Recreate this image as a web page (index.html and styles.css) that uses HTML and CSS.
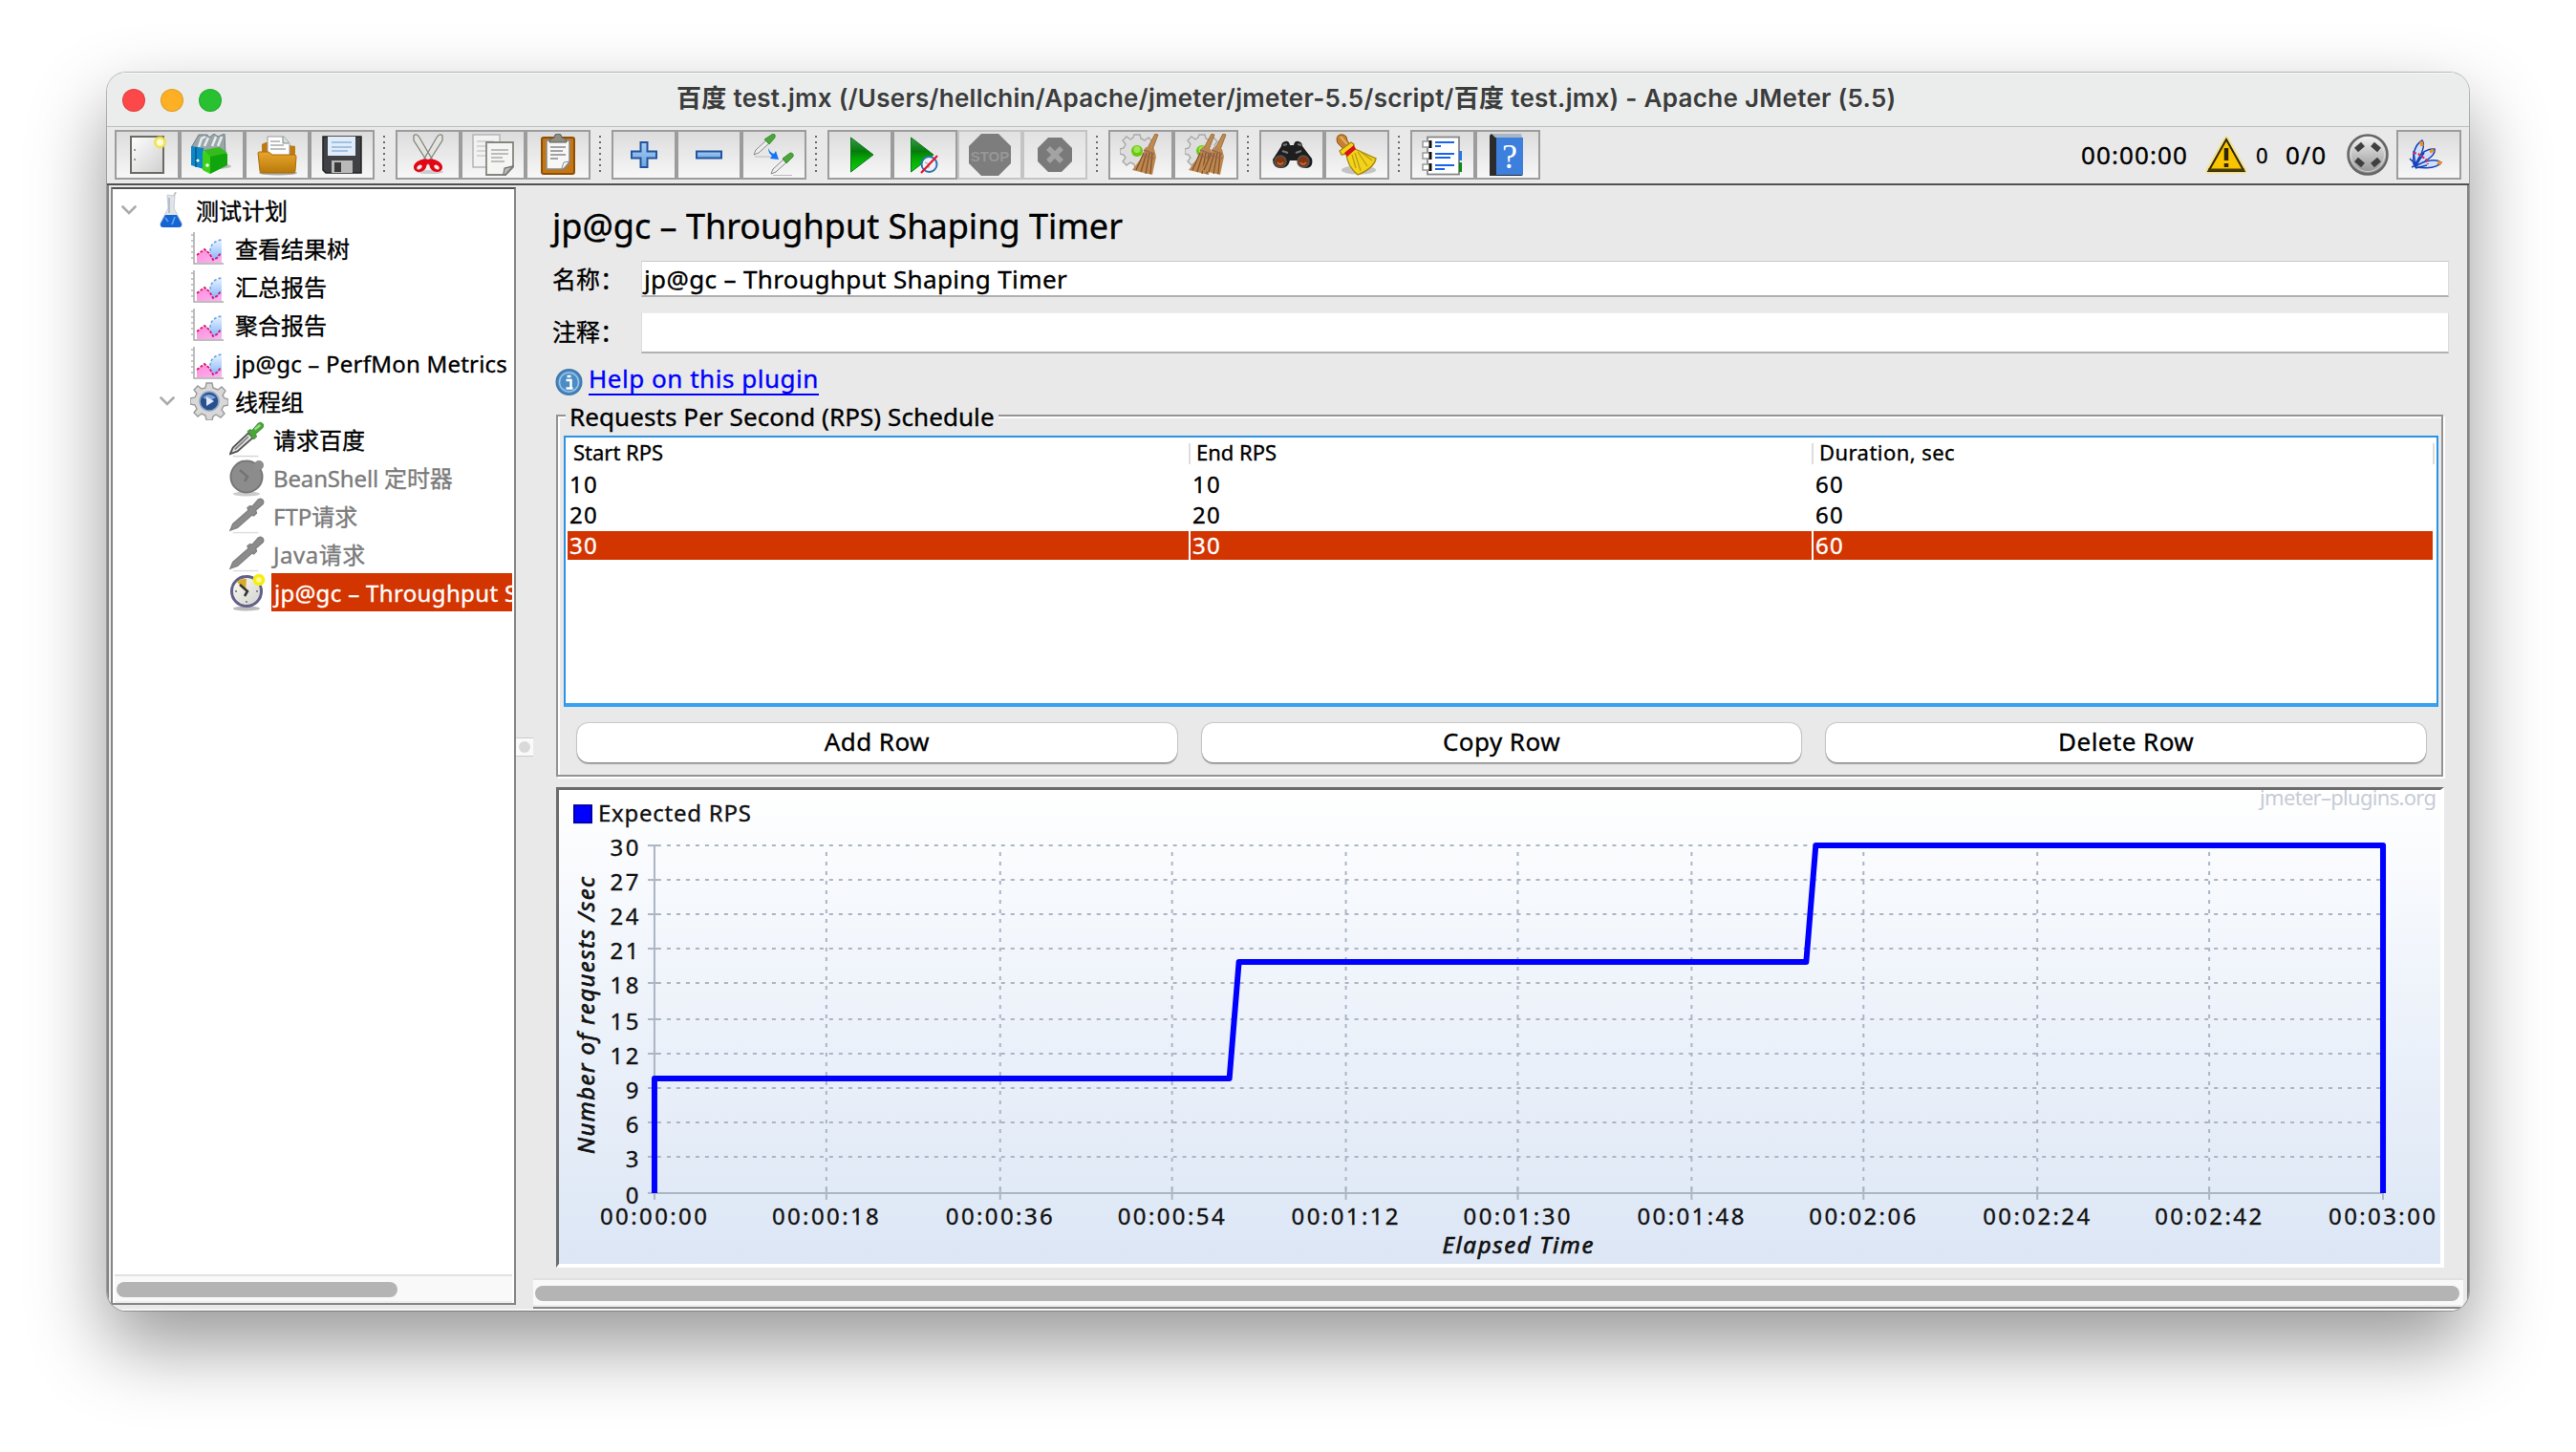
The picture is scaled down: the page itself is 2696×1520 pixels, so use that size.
FILE: index.html
```html
<!DOCTYPE html>
<html lang="zh-CN">
<head>
<meta charset="utf-8">
<title>Apache JMeter (5.5)</title>
<link rel="stylesheet" href="styles.css">
</head>
<body>
<svg class="defs" width="0" height="0" aria-hidden="true">
  <defs>
    <linearGradient id="gGray" x1="0" y1="0" x2="1" y2="1"><stop offset="0" stop-color="#fff"/><stop offset="1" stop-color="#cfcfcf"/></linearGradient>
    <linearGradient id="gGreen" x1="0" y1="0" x2="0" y2="1"><stop offset="0" stop-color="#3c9a4a"/><stop offset=".4" stop-color="#067a0c"/><stop offset=".6" stop-color="#04a404"/><stop offset="1" stop-color="#0ed00e"/></linearGradient>
    <linearGradient id="gFolder" x1="0" y1="0" x2="0" y2="1"><stop offset="0" stop-color="#e9a52c"/><stop offset="1" stop-color="#b97a0c"/></linearGradient>
    <linearGradient id="gBlue" x1="0" y1="0" x2="0" y2="1"><stop offset="0" stop-color="#a9cdf2"/><stop offset="1" stop-color="#6fa5e0"/></linearGradient>
    <linearGradient id="gMetal" x1="0" y1="0" x2="0" y2="1"><stop offset="0" stop-color="#f4f4f4"/><stop offset="1" stop-color="#8f8f8f"/></linearGradient>
    <linearGradient id="gPink" x1="0" y1="0" x2="1" y2="1"><stop offset="0" stop-color="#ff8ad8"/><stop offset="1" stop-color="#f9b6f3"/></linearGradient>
    <linearGradient id="gSky" x1="0" y1="0" x2="0" y2="1"><stop offset="0" stop-color="#eaf3ff"/><stop offset="1" stop-color="#7fb4fa"/></linearGradient>
    <linearGradient id="gDisk" x1="0" y1="0" x2="1" y2="1"><stop offset="0" stop-color="#fffff4"/><stop offset="1" stop-color="#cfcfce"/></linearGradient>
    <symbol id="chart" viewBox="0 0 36 36">
      <path d="M3 1v33h31" fill="none" stroke="#a9a9a9" stroke-width="1.500"/><path d="M0 4h3M0 10h3M0 16h3M0 22h3M0 28h3" stroke="#b5b5b5" stroke-width="1.500"/>
      <path d="M20 30V18l4-6 8-3v22z" fill="url(#gSky)"/><path d="M20 21c0-7 5-11 12-12" fill="none" stroke="#6aa5ee" stroke-width="1.600" stroke-dasharray="3 2"/>
      <path d="M6 33v-8l9-6 5 5 4 6 8-5v8z" fill="url(#gPink)"/><path d="M6 25l8-6 5 4 4 7 4-2 4-5" fill="none" stroke="#d8186f" stroke-width="1.800" stroke-dasharray="3 1.500"/>
    </symbol>
    <symbol id="dropper" viewBox="0 0 40 40">
      <path d="M4 38.500h28" stroke="#d5d5d5" stroke-width="1.500"/>
      <path d="M1 36l3-7L21 13l5 5L9 33z" fill="#e6e6e6" stroke="#555" stroke-width="2"/>
      <path d="M6 31L21 17" stroke="#888" stroke-width="2"/>
      <path d="M20 11l3-2 2 1 7-8c3-2 7 1 5 5l-8 7 1 3-3 3z" fill="#4ba53a" stroke="#3b8f30" stroke-width="1"/><path d="M28 9l6-5" stroke="#9bdc85" stroke-width="2.500"/>
    </symbol>
    <symbol id="dropperOff" viewBox="0 0 40 40">
      <path d="M4 38.500h28" stroke="#ddd" stroke-width="1.500"/>
      <path d="M1 36l3-7L21 14l-1-3 3-2 2 1 7-8c3-2 7 1 5 5l-8 7 1 3-3 3-2-1L9 33z" fill="#8c8c8c" stroke="#828282" stroke-width="1.500"/>
    </symbol>
    <symbol id="gearS" viewBox="-20 -20 40 40">
      <path d="M-4-14l1-5h6l1 5 5 2 4-3 4 4-3 5 2 3 4 1v6l-5 1-2 4 3 4-4 4-5-3-3 2-1 4h-6l-1-5-4-2-4 3-4-4 3-4-2-4-5-1v-6l5-1 2-4-3-4 4-4 4 3z" fill="#d8d8d8" stroke="#9a9a9a" stroke-width="1.400"/>
    </symbol>
    <symbol id="clock" viewBox="0 0 38 40">
      <ellipse cx="18" cy="37" rx="14" ry="2.500" fill="#bbb"/><circle cx="18" cy="19" r="15.500" fill="url(#gDisk)" stroke="#62608a" stroke-width="3"/>
      <path d="M17 19L8 9q5-4 10-3z" fill="#d9a92c"/><path d="M11 12l8 7-3 5" fill="none" stroke="#333" stroke-width="2.500"/>
      <path d="M18 29v2M6 19h2M28 19h2" stroke="#888" stroke-width="2"/><circle cx="31" cy="7" r="4.500" fill="#fff9a0" stroke="#f7ee10" stroke-width="3.500"/>
    </symbol>
    <symbol id="whisk" viewBox="0 0 30 44"><path d="M26 0l3 1-6 16-5-2z" fill="#c08a52" stroke="#8f5f30" stroke-width=".8"/><path d="M16 14l9 2 2 8-4 19-21-5 9-12z" fill="#bd8750"/><path d="M14 20L6 38M17 20l-6 20M20 20l-4 22M23 20l-2 22" stroke="#83542a" stroke-width="1.300"/><path d="M14 17l11 4M12 22l13 4" stroke="#9a6a55" stroke-width="1.500"/></symbol>
    <symbol id="cog" viewBox="-18 -18 36 36"><path d="M-3-17h6l1 4 4 2 4-3 4 4-3 4 2 3 3 1v5l-4 1-1 4 3 3-4 4-4-3-4 2-1 4h-5l-1-4-4-2-4 3-4-4 3-4-2-3-4-1v-5l4-1 2-4-3-4 4-4 4 3 3-2z" fill="#dedede" stroke="#a8a8a8" stroke-width="1.400"/><circle r="6" fill="#69c811"/><circle cy="-1.500" r="3.500" fill="#a0e650"/></symbol>
  </defs>
</svg>

<div class="window">
  <header class="titlebar">
    <span class="light red"></span><span class="light amber"></span><span class="light green"></span>
    <h1 class="caption">百度 test.jmx (/Users/hellchin/Apache/jmeter/jmeter-5.5/script/百度 test.jmx) - Apache JMeter (5.5)</h1>
  </header>

  <div class="toolbar">
    <div class="tools">
      <button class="tool"><svg viewBox="0 0 44 44"><rect x="5" y="3" width="34" height="38" fill="url(#gGray)" stroke="#6b6b66" stroke-width="2"/><path d="M8 17h2M8 27h2" stroke="#999" stroke-width="2"/><circle cx="35.500" cy="9" r="5" fill="#fffde0" stroke="#f3e13c" stroke-width="3" stroke-opacity=".85"/></svg></button>
      <button class="tool"><svg viewBox="0 0 44 44"><ellipse cx="26" cy="34" rx="16" ry="3" fill="#bbb"/><path d="M1 13L8 1h9l2 3 5-4 4 3 7-3 1 22H8z" fill="#9aa5aa" stroke="#6e7d84"/><path d="M8 14l3-9 4-2M14 13l4-9M22 13l4-10M28 13l4-10" stroke="#e8edee" stroke-width="2.500" fill="none"/><path d="M0 13l13 2v22L0 33z" fill="#0b86c6"/><path d="M5 14v21" stroke="#035688" stroke-width="1.500"/><path d="M12 18l8 4v20l-8-4z" fill="#3dd21a"/><path d="M20 22l12-3 6 2v12L20 42z" fill="#10a50d"/><path d="M13 17l17-3 8 6-18 4z" fill="#35bb1d"/><circle cx="17" cy="33" r="1.800" fill="#fff"/><circle cx="7" cy="28" r="1.600" fill="#fff"/></svg></button>
      <button class="tool"><svg viewBox="0 0 44 44"><ellipse cx="23" cy="41" rx="20" ry="2.500" fill="#aaa"/><path d="M6 11l4-2h5v10h-9zM34 12l7 1v20h-7z" fill="#bf7a10"/><path d="M12 3h17l6 7v14H12z" fill="#fff" stroke="#999"/><path d="M28 3v7h6" fill="#d6dede" stroke="#7b8b8b"/><path d="M15 8h10M15 12h14M15 16h16" stroke="#aaa" stroke-width="1.500"/><path d="M2 20q0-1 2-1h9l4 3h23q2 0 2 2l-1 15q0 2-3 2H7q-3 0-3-2z" fill="url(#gFolder)" stroke="#a86c08"/></svg></button>
      <button class="tool"><svg viewBox="0 0 44 44"><path d="M2 3h40v38H5l-3-3z" fill="#3f4145" stroke="#222" stroke-width="1.500"/><rect x="7" y="3" width="29" height="20" fill="#dfecfa"/><path d="M11 9h21M11 14h21M11 18h17" stroke="#92b3d6" stroke-width="1.500"/><rect x="11" y="28" width="22" height="13" fill="#b9b9b9"/><rect x="14" y="30" width="7" height="10" fill="#3a3a3a"/></svg></button>
      <i class="grip"></i>
      <button class="tool"><svg viewBox="0 0 44 44"><ellipse cx="24" cy="40" rx="14" ry="2" fill="#ccc"/><path d="M7 2q3-3 6 2l14 24-4 4L7 7zM37 2q-3-3-6 2L17 28l4 4L37 7z" fill="#e3e3e0" stroke="#85857e" stroke-width="1.300"/><path d="M22 27c-6-2-16 3-15 9 1 5 9 5 12 1 2-3 1-5 3-6 2 1 1 3 3 6 3 4 11 4 12-1 1-6-9-11-15-9z" fill="#e30613"/><ellipse cx="13" cy="35" rx="3" ry="2" fill="#eee" transform="rotate(-40 13 35)"/><ellipse cx="31" cy="35" rx="3" ry="2" fill="#eee" transform="rotate(40 31 35)"/></svg></button>
      <button class="tool"><svg viewBox="0 0 44 44"><rect x="1" y="1" width="28" height="34" fill="#f2f2f2" stroke="#b5b5b5" stroke-width="1.500"/><path d="M5 8h18M5 13h18M5 18h10M5 23h10" stroke="#ccc" stroke-width="1.500"/><path d="M15 9h28v26l-8 8H15z" fill="#f5f5f3" stroke="#85857f" stroke-width="1.800"/><path d="M20 17h18M20 21h18M20 25h12M20 29h14" stroke="#aaa" stroke-width="1.500"/><path d="M43 34l-8 9-2-1 1-6z" fill="#b9b9b5" stroke="#777" stroke-width="1.300"/></svg></button>
      <button class="tool"><svg viewBox="0 0 44 44"><rect x="5" y="4" width="34" height="38" rx="2" fill="#c57512" stroke="#8c4f08" stroke-width="2"/><path d="M10 7h24v23l-6 7H10z" fill="#f7f7f7" stroke="#888" stroke-width="1.500"/><path d="M34 29l-7 8-1-1 2-6z" fill="#fff" stroke="#888"/><path d="M14 14h16M14 18h13M14 22h16M14 26h8" stroke="#888" stroke-width="1.500"/><path d="M13 9q0-4 5-5 0-4 4-4t4 4q5 1 5 5z" fill="#8d8d84" stroke="#5c5c55"/></svg></button>
      <i class="grip"></i>
      <button class="tool"><svg viewBox="0 0 44 44"><path d="M18.500 9h7v9.500H35v7h-9.500V35h-7v-9.500H9v-7h9.500z" fill="url(#gBlue)" stroke="#20549e" stroke-width="2"/></svg></button>
      <button class="tool"><svg viewBox="0 0 44 44"><rect x="9" y="18.500" width="26" height="7" fill="url(#gBlue)" stroke="#20549e" stroke-width="2"/></svg></button>
      <button class="tool"><svg viewBox="0 0 44 44"><path d="M1 22l2-5L14 7l3 3L6 20z" fill="#eee" stroke="#888"/><path d="M12 6l9-6q3 0 2 4l-6 7z" fill="#4ba53a" stroke="#3b8f30"/><path d="M19 42l2-5 11-10 3 3-11 10z" fill="#eee" stroke="#888"/><path d="M31 26l8-6q4 0 3 4l-7 7z" fill="#4ba53a" stroke="#3b8f30"/><path d="M2 24h18M21 43.500h20" stroke="#bbb"/><path d="M16 15q2 5 6 6l2-3 3 9-9-1 2-3q-4-3-4-8z" fill="#1773f5"/></svg></button>
      <i class="grip"></i>
      <button class="tool"><svg viewBox="0 0 44 44"><path d="M12.500 4L36 22 12.500 40z" fill="url(#gGreen)" stroke="#0b7a1c"/></svg></button>
      <button class="tool"><svg viewBox="0 0 44 44"><path d="M7.500 4L31 22 7.500 40z" fill="url(#gGreen)" stroke="#0b7a1c"/><circle cx="26.500" cy="32" r="8" fill="#eef2f8" stroke="#2a73b8" stroke-width="2"/><path d="M22 30l5 2 3-4M26 32v4" stroke="#999" fill="none"/><path d="M18 41L35 23" stroke="#e8152a" stroke-width="2.200"/></svg></button>
      <button class="tool off"><svg viewBox="0 0 44 44"><path d="M13 0h18l13 13v18L31 44H13L0 31V13z" fill="#7d7d7d"/><text x="22" y="29" text-anchor="middle" class="stop">STOP</text></svg></button>
      <button class="tool off"><svg viewBox="0 0 44 44"><path d="M15 4h14l11 11v14L29 40H15L4 29V15z" fill="#7a7a7a"/><path d="M15 15l14 14M29 15L15 29" stroke="#a3a3a3" stroke-width="5.500"/></svg></button>
      <i class="grip"></i>
      <button class="tool"><svg viewBox="0 0 44 44"><use href="#cog" x="0" y="0" width="36" height="36"/><use href="#whisk" x="11" y="0" width="30" height="44"/></svg></button>
      <button class="tool"><svg viewBox="0 0 44 44"><use href="#cog" x="0" y="0" width="36" height="36"/><use href="#whisk" x="2" y="0" width="30" height="44"/><use href="#whisk" x="14" y="0" width="30" height="44"/></svg></button>
      <i class="grip"></i>
      <button class="tool"><svg viewBox="0 0 44 44"><path d="M11 13q0-4 4-5t5 4h4q1-5 5-4t4 5l10 13q2 10-6 10-7 0-9-8h-8q-2 8-9 8-9 0-9-9z" fill="#1e1e1e"/><path d="M13 12l4-1M28 11l4 1M12 18l6 2M26 20l6-2" stroke="#777" stroke-width="2"/><circle cx="10" cy="29" r="6" fill="#7d3512" stroke="#555" stroke-width="1.500"/><circle cx="34" cy="29" r="6" fill="#7d3512" stroke="#555" stroke-width="1.500"/><path d="M7 30q3 4 6 0M31 30q3 4 6 0" stroke="#c96a35" stroke-width="2" fill="none"/></svg></button>
      <button class="tool"><svg viewBox="0 0 44 44"><ellipse cx="24" cy="38" rx="18" ry="4.500" fill="#c4c4c4"/><path d="M1 6q0-6 7-5 4 1 4 6l3 5-6 5-5-5q-3-2-3-6z" fill="#c7802f" stroke="#8b5518"/><path d="M5 3l7 8" stroke="#e5b06c" stroke-width="2"/><path d="M4 18l12-9 3 2-1 4 24 11q-2 10-19 17Q12 34 11 21l-5 1z" fill="#f2d21b" stroke="#a68706" stroke-width="1.300"/><path d="M9 20l10-8 2 4-9 8z" fill="#d91219"/><path d="M20 20l6 19M23 19l10 15M17 22l4 14M25 18l13 10" stroke="#b99a10" stroke-width="1.200"/></svg></button>
      <i class="grip"></i>
      <button class="tool"><svg viewBox="0 0 44 44"><rect x="6" y="3.500" width="33" height="39" fill="#fff" stroke="#888" stroke-width="1.800"/><rect x="39" y="18" width="3" height="10" fill="#2677e8"/><rect x="39" y="30" width="3" height="10" fill="#0c8a12"/><g fill="#fff" stroke="#999" stroke-width="1.500"><rect x="1" y="8" width="8" height="6"/><rect x="1" y="20" width="8" height="6"/><rect x="1" y="32" width="8" height="6"/></g><path d="M9 7v8M9 19v8M9 31v8" stroke="#111" stroke-width="3"/><path d="M14 9h20M14 21h20M14 33h20" stroke="#1763ec" stroke-width="2"/><path d="M14 13h6M14 25h16M14 37h10" stroke="#1763ec" stroke-width="2"/></svg></button>
      <button class="tool"><svg viewBox="0 0 44 44"><path d="M3 3q0-3 3-3h30v4l2 38q0 2-2 2H3z" fill="#2c2c2c"/><path d="M5 0h31l1 4H9z" fill="#a9b7c4"/><path d="M10 4h28v39H10z" fill="#3c7fdd"/><text x="24" y="36" text-anchor="middle" class="ask">?</text></svg></button>
    </div>
    <div class="status">
      <span class="clockText">00:00:00</span>
      <svg class="warn" viewBox="0 0 44 40"><path d="M22 3L41 37H3z" fill="#fbc400" stroke="#f3e08a" stroke-width="5" stroke-linejoin="round"/><path d="M22 4L40.500 37h-37z" fill="#fbc400" stroke="#2e2704" stroke-width="2"/><path d="M3 36h38" stroke="#4a3a00" stroke-width="3"/><path d="M22 13v13M22 29v4" stroke="#2e2704" stroke-width="4.500"/></svg>
      <span class="errs">0</span>
      <span class="threads">0/0</span>
      <svg class="knob" viewBox="0 0 44 44"><circle cx="22" cy="22" r="20.500" fill="url(#gMetal)" stroke="#666" stroke-width="2.500"/><circle cx="22" cy="22" r="17.500" fill="none" stroke="#eee" stroke-opacity=".6"/><g stroke="#3f3f3f" stroke-width="6" fill="none"><path d="M10 17l7-6M27 11l7 6M10 27l7 6M34 27l-7 6"/></g></svg>
      <button class="tool"><svg viewBox="0 0 44 44"><g fill="#cfe0fb" stroke="#1643b8" stroke-width="1.500"><path d="M6 32Q4 14 15 7q5 7-8 26z"/><path d="M8 33Q14 15 28 16q2 8-20 18z"/><path d="M8 34q18-10 27-4-6 8-27 5z"/></g><path d="M2 26l7 7-5 2M6 18l2 15M13 24l-5 10M17 20L8 34M8 36l12-3" stroke="#1643b8" stroke-width="1.500" fill="none"/><path d="M6 20l5 1 3 3 5 2 2 6" stroke="#e0244e" stroke-width="2" stroke-dasharray="3 2" fill="none"/><path d="M14 8l1 5M23 19l4-2M31 30l4 1" stroke="#f58c1b" stroke-width="3.500"/></svg></button>
    </div>
  </div>

  <div class="body">
    <aside class="tree">
      <ul class="nodes">
        <li class="node l0"><svg class="chev" viewBox="0 0 16 10"><path d="M1.500 1.500L8 8l6.500-6.500"/></svg><svg class="ico flask" viewBox="0 0 28 38"><path d="M10 3l8 1-1 13 8 15q1 4-3 4H6q-4 0-3-4l8-15z" fill="#dfe3ea" stroke="#c9ced6"/><path d="M12 6v16" stroke="#aab2c0" stroke-width="1.500"/><path d="M17 4l2-4" stroke="#c5c5c5" stroke-width="2"/><path d="M8 24h12l5 9q1 4-3 4H6q-4 0-3-4z" fill="#1464d2"/><path d="M8 27l3 4M18 26l-3 8" stroke="#5b9bf2" stroke-width="2"/></svg><span>测试计划</span></li>
        <li class="node l1"><svg class="ico"><use href="#chart"/></svg><span>查看结果树</span></li>
        <li class="node l1"><svg class="ico"><use href="#chart"/></svg><span>汇总报告</span></li>
        <li class="node l1"><svg class="ico"><use href="#chart"/></svg><span>聚合报告</span></li>
        <li class="node l1"><svg class="ico"><use href="#chart"/></svg><span class="w1">jp@gc – PerfMon Metrics</span></li>
        <li class="node l1 group"><svg class="chev" viewBox="0 0 16 10"><path d="M1.500 1.500L8 8l6.500-6.500"/></svg><svg class="ico gear" viewBox="0 0 40 40"><use href="#gearS" width="40" height="40"/><circle cx="20" cy="20" r="10" fill="#28508f" stroke="#8ea3c4" stroke-width="1.500"/><path d="M13 16q6-6 14 0l-7 4z" fill="#7fa3d6"/><path d="M17 15l8 5-8 5z" fill="#dfe9f7"/></svg><span>线程组</span></li>
        <li class="node l2"><svg class="ico"><use href="#dropper"/></svg><span>请求百度</span></li>
        <li class="node l2 dim"><svg class="ico" viewBox="0 0 38 40"><ellipse cx="18" cy="37" rx="14" ry="2.500" fill="#ccc"/><circle cx="18" cy="19" r="16.500" fill="#8c8c8c" stroke="#777" stroke-width="2"/><circle cx="31" cy="7" r="5" fill="#8e8e8e"/><path d="M11 12l8 7-3 5" fill="none" stroke="#747474" stroke-width="2.500"/></svg><span class="w2">BeanShell 定时器</span></li>
        <li class="node l2 dim"><svg class="ico"><use href="#dropperOff"/></svg><span>FTP请求</span></li>
        <li class="node l2 dim"><svg class="ico"><use href="#dropperOff"/></svg><span class="w3">Java请求</span></li>
        <li class="node l2 sel"><svg class="ico"><use href="#clock"/></svg><span>jp@gc – Throughput Shaping Timer</span></li>
      </ul>
      <div class="scroll"><div class="thumb"></div></div>
    </aside>
    <div class="splitter"><i></i></div>
    <main class="pane">
      <div class="form">
        <h2 class="heading">jp@gc – Throughput Shaping Timer</h2>
        <div class="field"><label>名称：</label><div class="input">jp@gc – Throughput Shaping Timer</div></div>
        <div class="field second"><label>注释：</label><div class="input"></div></div>
        <div class="help"><svg viewBox="0 0 28 28"><circle cx="14" cy="14" r="13" fill="#4a8cc6" stroke="#4279ad" stroke-width="2"/><circle cx="14" cy="14" r="10" fill="none" stroke="#9cc3e4" stroke-width="1.500"/><path d="M12 8h4M11 12h5v8M11 20.500h7" stroke="#fff" stroke-width="2.500" fill="none"/></svg><a>Help on this plugin</a></div>
        <section class="schedule">
          <h3 class="legend"><span>Requests Per Second (RPS) Schedule</span></h3>
          <div class="table">
            <div class="tr head"><span>Start RPS</span><span>End RPS</span><span class="wide">Duration, sec</span></div>
            <div class="tr"><span>10</span><span>10</span><span>60</span></div>
            <div class="tr"><span>20</span><span>20</span><span>60</span></div>
            <div class="tr on"><span>30</span><span>30</span><span>60</span></div>
          </div>
          <div class="buttons"><button>Add Row</button><button>Copy Row</button><button>Delete Row</button></div>
        </section>
        <div class="plot">
          <svg id="plot" viewBox="585 827 1970 496"></svg>
        </div>
      </div>
      <div class="scroll"><div class="thumb"></div></div>
    </main>
  </div>
</div>
<script src="plot.js"></script>
</body>
</html>
```
FILE: plot.js
```js
// Draws the expected RPS chart: grid, axes, labels and the step line.
const svg = document.getElementById('plot');
const xs = [685, 865, 1047, 1227, 1409, 1589, 1771, 1951, 2133, 2313, 2495];
const ys = [1249, 1211, 1175, 1139, 1103, 1067, 1029, 993, 957, 921, 885];
const times = ['00:00:00', '00:00:18', '00:00:36', '00:00:54', '00:01:12', '00:01:30', '00:01:48', '00:02:06', '00:02:24', '00:02:42', '00:03:00'];
let out = '';
ys.forEach((y, i) => {
  if (i) out += `<path class="grid" d="M698 ${y}H2495"/>`;
  out += `<path class="axis" d="M678 ${y}h14"/>`;
  out += `<text class="num" x="668.5" y="${y + 11}" text-anchor="end" ${i > 3 ? 'textLength="30"' : ''}>${i * 3}</text>`;
});
xs.forEach((x, i) => {
  if (i) out += `<path class="grid" d="M${x} 892V1249"/>`;
  out += `<path class="axis" d="M${x} ${i === 0 || i === 10 ? 1249 : 1243}V1256"/>`;
  out += `<text class="num" x="${x - 57}" y="1282" textLength="112">${times[i]}</text>`;
});
out += '<path class="axis" d="M685 885V1249H2495"/>';
out += '<path class="line" d="M685 1249V1129H1287L1297 1007H1891L1901 885H2495V1249"/>';
out += '<rect x="601" y="843" width="18" height="18" class="key"/>';
out += '<text class="num" x="626" y="860" textLength="160">Expected RPS</text>';
out += '<text class="mark" x="2366" y="843" textLength="185">jmeter–plugins.org</text>';
out += '<text class="title" x="1510" y="1312" textLength="158">Elapsed Time</text>';
out += '<text class="title" transform="translate(622 1208) rotate(-90)" textLength="290">Number of requests /sec</text>';
svg.innerHTML = out;
```
FILE: styles.css
```css
* { box-sizing: border-box; }
body { margin: 0; width: 2696px; height: 1520px; padding: 76px 112px 0; overflow: hidden; background: #fff; color: #000; font-family: "Noto Sans", "Noto Sans CJK SC", sans-serif; font-size: 26px; -webkit-text-stroke: .35px; }
.defs { position: absolute; }
button { font: inherit; color: inherit; margin: 0; padding: 0; }
h1, h2, h3, ul { margin: 0; padding: 0; font-weight: 400; font-size: inherit; }
span, a, label, h1, h2, .input { white-space: pre; }

.window { width: 2472px; height: 1296px; border-radius: 20px; overflow: hidden; background: #e9e9e9; display: flex; flex-direction: column; box-shadow: 0 0 0 1px rgba(0,0,0,.24), 0 36px 80px rgba(0,0,0,.41); }
.titlebar { height: 57px; flex: none; display: flex; align-items: center; gap: 16px; padding-left: 16px; background: #ebedec; border-bottom: 1px solid #bdbebd; border-top: 1px solid #f7f8f7; }
.light { width: 24px; height: 24px; border-radius: 50%; border: 1px solid rgba(0,0,0,.12); }
.red { background: #fc4848; } .amber { background: #fdb024; } .green { background: #28c131; }
.caption { flex: 1; padding-left: 460px; margin-top: -3px; font: 600 26px/50px Inter, "Noto Sans CJK SC", sans-serif; letter-spacing: .29px; color: #3b3c3c; -webkit-text-stroke: 0; }

.toolbar { height: 61px; flex: none; display: flex; justify-content: space-between; padding: 3px 8px 0; border-bottom: 2px solid #4f514f; }
.tools, .status { display: flex; height: 52px; align-items: center; }
.tool { width: 68px; height: 52px; border: 2px solid #9c9c9c; background: linear-gradient(#dcdcdc, #f7f7f7); display: flex; align-items: center; justify-content: center; }
.tool.off { border-color: #c4c4c4; background: linear-gradient(#e2e2e2, #f0f0f0); }
.tool svg { width: 44px; height: 44px; flex: none; }
.grip { width: 22px; height: 40px; padding: 0 11px 0 9px; background: repeating-linear-gradient(#6d6d6d 0 2px, transparent 2px 6px) content-box; }
.stop { font: 700 15px "Liberation Sans", sans-serif; fill: #979797; }
.ask { font: 36px "Liberation Serif", serif; fill: #fff; }
.clockText { width: 130px; letter-spacing: 1.1px; }
.warn { width: 44px; height: 40px; }
.errs { font-size: 22px; width: 31px; margin-left: 9px; }
.threads { width: 64px; letter-spacing: 1.300px; }
.knob { width: 44px; height: 44px; margin-right: 8px; }

.body { flex: 1; min-height: 0; display: flex; padding: 2px 0 0 2px; border-left: 2px solid #858585; border-right: 2px solid #858585; border-bottom: 2px solid #f5f5f5; }
.tree { width: 424px; height: 1170px; border: 2px solid #858786; border-top-color: #4f514f; background: #fff; padding: 0 2px; display: flex; flex-direction: column; font-size: 24px; }
.nodes { list-style: none; flex: 1; padding-top: 2px; overflow: hidden; }
.node { height: 40px; display: flex; align-items: center; white-space: nowrap; overflow: hidden; }
.chev { width: 16px; height: 10px; fill: none; stroke: #ababab; stroke-width: 2.600; stroke-linecap: round; flex: none; }
.ico { flex: none; width: 36px; height: 36px; }
.node span { height: 40px; line-height: 41px; }
.w1 { letter-spacing: .220px; } .w2 { letter-spacing: -.150px; } .w3 { letter-spacing: .500px; }
.l0 { padding-left: 7px; } .l0 .ico { width: 28px; height: 38px; margin: 0 12px 0 22px; }
.l1 { padding-left: 80px; } .l1 .ico { margin-right: 10px; }
.l1.group { padding-left: 47px; } .l1.group .ico { width: 40px; height: 40px; margin: 0 7px 0 16px; }
.l2 { padding-left: 120px; } .l2 .ico { width: 38px; height: 40px; margin-right: 8px; }
.dim { color: #7b7b7b; }
.sel .ico { margin-right: 6px; }
.sel span { flex: 1; background: #d33501; color: #fff; padding-left: 3px; overflow: hidden; letter-spacing: .350px; }
.scroll { height: 30px; flex: none; background: #f9f9f9; border-top: 2px solid #e1e1e1; border-bottom: 2px solid #ececec; padding: 6px 0 0 2px; }
.thumb { height: 16px; border-radius: 8px; background: #b4b4b4; width: 294px; }

.splitter { width: 18px; display: flex; align-items: center; padding-bottom: 2px; }
.splitter i { width: 18px; height: 20px; background: #fafafa; border-top: 1px solid #ccc; border-bottom: 1px solid #ccc; display: flex; align-items: center; justify-content: center; }
.splitter i::after { content: ""; width: 12px; height: 12px; border-radius: 50%; background: #d9d9d9; }

.pane { flex: 1; min-width: 0; display: flex; flex-direction: column; border-bottom: 2px solid #858786; }
.form { height: 1142px; flex: none; padding: 10px 19px 0 20px; display: flex; flex-direction: column; }
.heading { font-size: 36px; line-height: 62px; height: 67px; }
.field { display: flex; height: 38px; }
.field label { width: 93px; line-height: 38px; font-size: 25px; }
.input { flex: 1; background: #fff; border: 1px solid #dcdcdc; border-top-color: #c9c9c9; border-bottom: 2px solid #b0b0b0; padding-left: 2px; line-height: 36px; letter-spacing: .370px; }
.second { height: 43px; margin-top: 16px; } .second label { line-height: 40px; } .second .input { border-top-color: #eee; }
.help { display: flex; height: 31px; margin-top: 13px; padding-left: 3px; }
.help svg { width: 29px; height: 28px; margin: 3px 6px 0 0; }
.help a { color: #0000fe; height: 31px; line-height: 26px; border-bottom: 2px solid #0000fe; letter-spacing: .530px; }

.schedule { height: 379px; width: 1975px; margin: 20px 0 0 4px; border: 2px solid #939393; box-shadow: 2px 2px 0 #fff, inset 2px 2px 0 #fff; padding: 0 3px 0 6px; display: flex; flex-direction: column; }
.legend { height: 20px; align-self: flex-start; margin-left: 2px; }
.legend span { display: block; margin-top: -18px; height: 36px; line-height: 36px; padding: 0 4px; background: #e9e9e9; letter-spacing: .080px; }
.table { height: 284px; flex: none; background: #fff; border: 2px solid #2b92e4; border-bottom: 4px solid #37a2f2; padding-left: 2px; }
.tr { display: grid; grid-template-columns: 652px 652px 650px; height: 32px; font-size: 24px; line-height: 29px; padding-bottom: 2px; }
.tr span { padding-left: 2px; border-right: 2px solid #fff; letter-spacing: 1.200px; }
.head { height: 34px; font-size: 22px; padding: 6px 0 6px; }
.head span { line-height: 19px; letter-spacing: 0; padding-left: 6px; border-right: 2px solid #ddd; }
.head .wide { letter-spacing: .440px; }
.on span { background: #d33501; color: #fff; }
.buttons { display: flex; gap: 26px; padding: 17px 13px 0; margin-left: 1px; }
.buttons button { flex: 1; height: 41px; border: 0; border-radius: 12px; background: #fff; box-shadow: 0 0 1px 1px rgba(0,0,0,.14), 0 1.500px 1px rgba(0,0,0,.28); line-height: 36px; padding-bottom: 3px; letter-spacing: .450px; }

.plot { margin: 11px 0 0 4px; width: 1976px; height: 503px; border: 3px solid #6c6c6c; border-right: 4px solid #fff; border-bottom: 4px solid #fff; background: linear-gradient(#fff, #f2f6fc 33%, #dce6f5); }
.plot svg { display: block; width: 1969px; height: 496px; }
.num { font-size: 24px; fill: #111; stroke: #111; stroke-width: .35px; }
.title { font-size: 24px; font-style: italic; fill: #111; stroke: #111; stroke-width: .7px; }
.mark { font-size: 22px; fill: #c6ccd6; }
.grid { fill: none; stroke: #abb5c3; stroke-width: 2; stroke-dasharray: 4 6; }
.axis { fill: none; stroke: #abb5c3; stroke-width: 2; }
.line { fill: none; stroke: #0000fe; stroke-width: 6; stroke-linejoin: round; }
.key { fill: #0000fe; stroke: #0000a8; stroke-width: 2; }
.pane .scroll { height: 30px; margin: 0 4px 0 0; padding-top: 6px; }
.pane .thumb { width: 2014px; }
```
